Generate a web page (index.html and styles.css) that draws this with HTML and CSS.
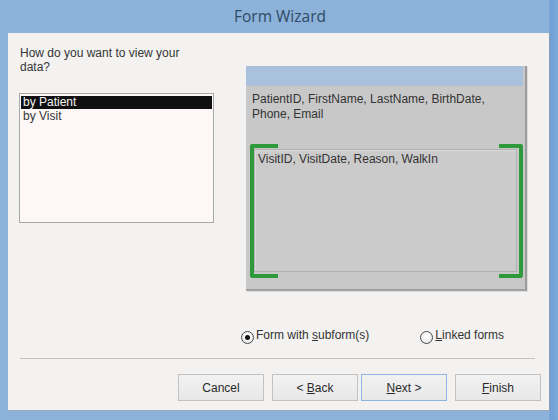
FILE: index.html
```html
<!DOCTYPE html>
<html>
<head>
<meta charset="utf-8">
<link rel="stylesheet" href="styles.css">
</head>
<body>
<div class="window">
  <div class="titlebar">Form Wizard</div>
  <div class="panel">
    <div class="top">
      <div class="leftcol">
        <div class="question">How do you want to view your<br>data?</div>
        <div class="listbox">
          <div class="item selected">by Patient</div>
          <div class="item">by Visit</div>
        </div>
      </div>
      <div class="rightcol">
        <div class="preview">
          <div class="preview-head"></div>
          <div class="main-fields">PatientID, FirstName, LastName, BirthDate,<br>Phone, Email</div>
          <div class="subform">VisitID, VisitDate, Reason, WalkIn</div>
          <div class="bracket left"></div>
          <div class="bracket right"></div>
        </div>
      </div>
    </div>
    <div class="options">
      <label class="opt first"><span class="radio checked"></span><span class="opt-text">Form with <u>s</u>ubform(s)</span></label>
      <label class="opt second"><span class="radio"></span><span class="opt-text"><u>L</u>inked forms</span></label>
    </div>
    <div class="sep"></div>
    <div class="buttons">
      <button class="btn">Cancel</button>
      <button class="btn back">&lt; <u>B</u>ack</button>
      <button class="btn next"><u>N</u>ext &gt;</button>
      <button class="btn finish"><u>F</u>inish</button>
    </div>
  </div>
</div>
</body>
</html>
```

FILE: styles.css
```css
* { box-sizing: border-box; }
html, body { margin: 0; padding: 0; }
body {
  width: 558px;
  height: 420px;
  overflow: hidden;
  background: #8cb2da;
  font-family: "Liberation Sans", Arial, sans-serif;
  font-size: 12px;
  color: #353535;
}
.window {
  width: 558px;
  height: 420px;
  display: flex;
  flex-direction: column;
  background: linear-gradient(to right, #8cb2da 0, #8cb2da 549px, #6f9fd6 550px, #7aa8d8 558px);
}
.titlebar {
  height: 33px;
  line-height: 32px;
  text-align: center;
  font-family: "Open Sans", "DejaVu Sans", sans-serif;
  font-size: 15.5px;
  color: #2e4a64;
  padding-left: 2px;
}
.panel {
  margin-left: 8px;
  width: 542px;
  height: 378px;
  background: #f3f2f0;
  border-right: 1px solid #8e9cab;
  border-bottom: 1px solid #9aa8b6;
  display: flex;
  flex-direction: column;
  padding-top: 13px;
}
.top {
  display: flex;
  height: 245px;
}
.leftcol {
  width: 206px;
  padding-left: 11px;
}
.question {
  padding-left: 1px;
  line-height: 14px;
  height: 28px;
}
.listbox {
  margin-top: 19px;
  width: 195px;
  height: 130px;
  background: #fdf8f7;
  border: 1px solid #a9a9a9;
  padding: 2px 1px;
}
.item {
  height: 13px;
  line-height: 13px;
  padding-left: 2px;
  margin-bottom: 1px;
}
.item.selected {
  background: #101010;
  color: #f4f4f4;
}
.rightcol {
  margin-left: 32px;
  margin-top: 20px;
}
.preview {
  position: relative;
  width: 281px;
  height: 225px;
  background: #c8c8c8;
  border-right: 2px solid #9c9c9c;
  border-bottom: 2px solid #a2a2a2;
  box-shadow: 1px 1px 0 #dcdcdc;
}
.preview-head {
  width: 277px;
  height: 20px;
  background: #a9c1dd;
}
.main-fields {
  margin-top: 6px;
  padding-left: 6px;
  line-height: 15px;
  color: #333;
}
.subform {
  margin-top: 27px;
  margin-left: 8px;
  width: 263px;
  height: 123px;
  background: #cbcbcb;
  border: 1px solid #b0b0b0;
  box-shadow: inset 1px 1px 0 #dadada;
  padding: 2px 3px;
  line-height: 14px;
  color: #333;
}
.bracket {
  position: absolute;
  top: 78px;
  height: 134px;
  border: 4px solid #2f9a3b;
}
.bracket.left {
  left: 4px;
  width: 28px;
  border-right: none;
  border-radius: 3px 0 0 3px;
}
.bracket.right {
  left: 253px;
  width: 24px;
  border-left: none;
  border-radius: 0 3px 3px 0;
}
.options {
  margin-top: 36px;
  height: 15px;
  display: flex;
  align-items: center;
  position: relative;
}
.opt {
  display: flex;
  align-items: center;
}
.opt.first { margin-left: 233px; }
.opt.second { margin-left: 51px; }
.radio {
  width: 13px;
  height: 13px;
  border-radius: 50%;
  border: 1px solid #4a4a4a;
  background: radial-gradient(circle at 50% 40%, #ffffff 0, #f2f2f2 50%, #d8d8d8 100%);
  position: relative;
  margin-top: 5px;
}
.radio.checked::after {
  content: "";
  position: absolute;
  left: 3px;
  top: 3px;
  width: 5px;
  height: 5px;
  border-radius: 50%;
  background: #111;
}
.opt-text {
  margin-left: 2px;
  color: #333;
}
.sep {
  margin-top: 16px;
  margin-left: 12px;
  margin-right: 14px;
  height: 1px;
  background: #c2c2c2;
}
.buttons {
  margin-top: 15px;
  display: flex;
  padding-left: 170px;
}
.btn {
  width: 86px;
  height: 27px;
  font-family: "Liberation Sans", Arial, sans-serif;
  font-size: 12px;
  color: #2a2a2a;
  background: linear-gradient(to bottom, #f2f2f2, #e8e8e8);
  border: 1px solid #c2c2c2;
  border-radius: 0;
  padding: 0;
  margin-right: 8px;
}
.btn.back { margin-right: 3px; }
.btn.next { border-color: #8bb6e4; }
.btn.finish { margin-right: 0; }
```
